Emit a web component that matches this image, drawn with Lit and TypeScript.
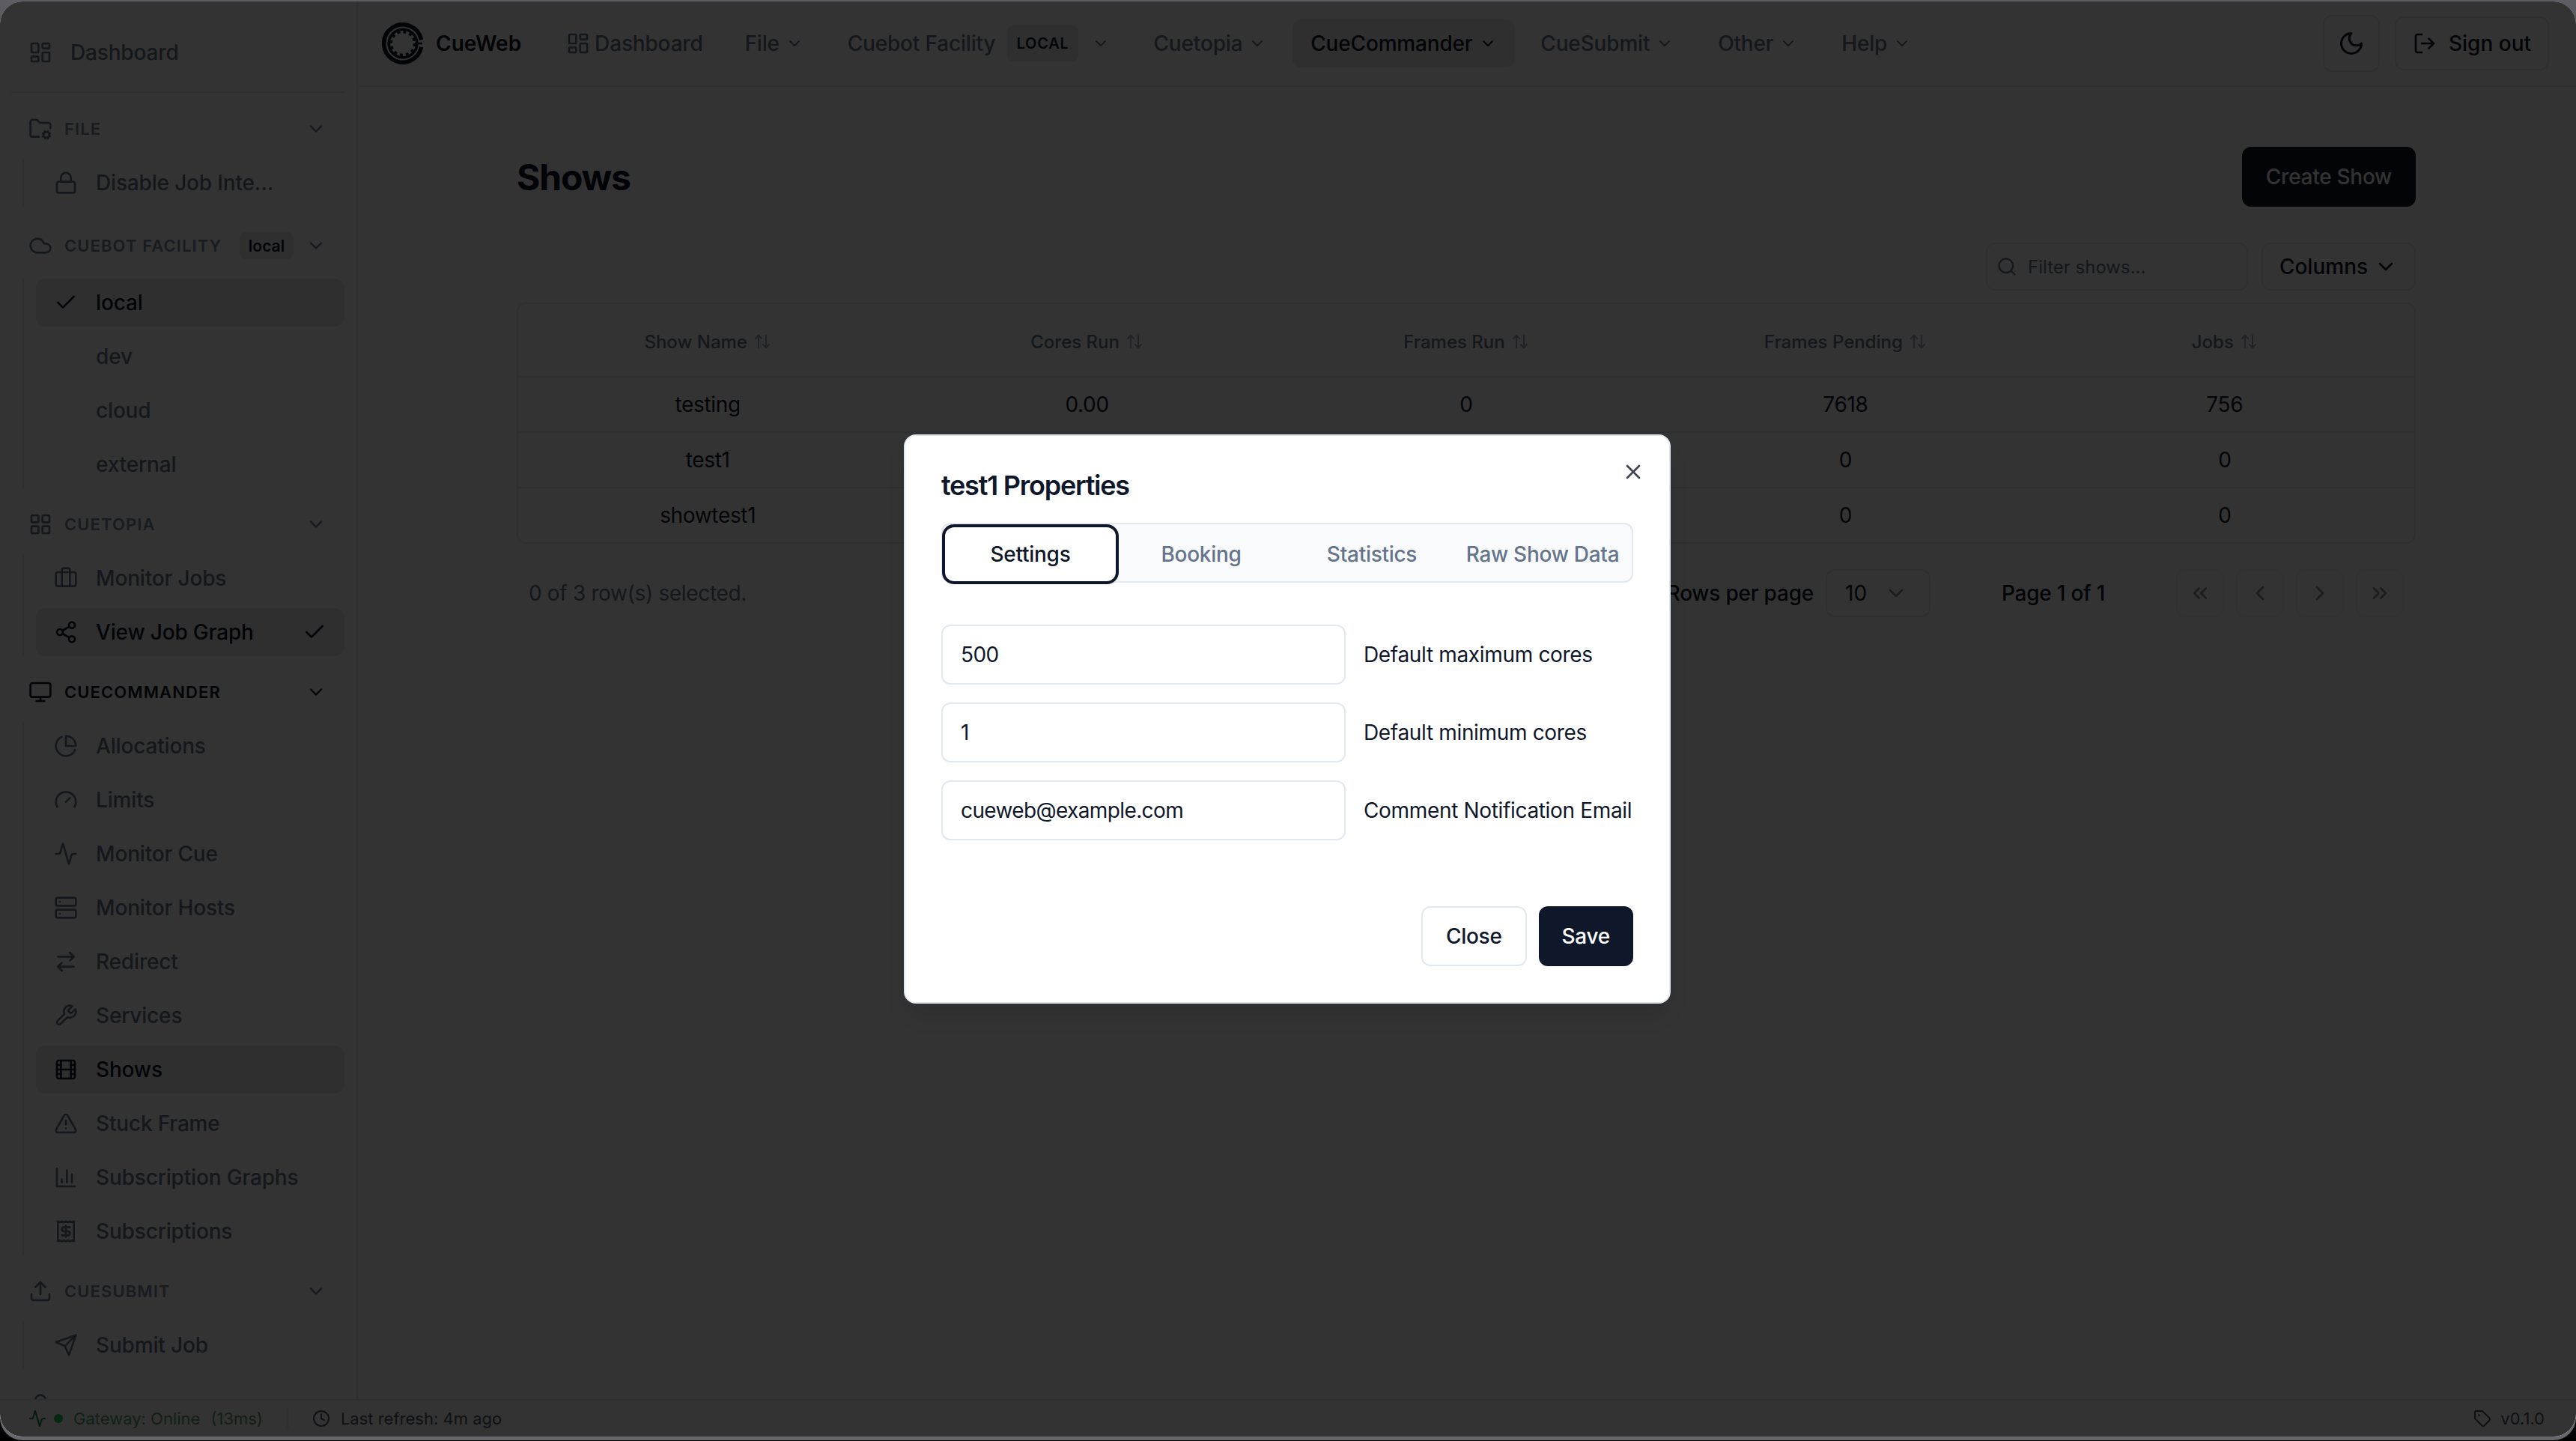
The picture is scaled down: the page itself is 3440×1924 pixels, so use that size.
import { LitElement, html, css, svg } from "lit";
import { customElement } from "lit/decorators.js";

const I: Record<string, any> = {
  dash: svg`<rect x="3" y="3" width="7" height="9" rx="1"/><rect x="14" y="3" width="7" height="5" rx="1"/><rect x="14" y="12" width="7" height="9" rx="1"/><rect x="3" y="16" width="7" height="5" rx="1"/>`,
  folderCog: svg`<circle cx="18" cy="18" r="3"/><path d="M10.3 20H4a2 2 0 0 1-2-2V5a2 2 0 0 1 2-2h3.9a2 2 0 0 1 1.69.9l.81 1.2a2 2 0 0 0 1.67.9H20a2 2 0 0 1 2 2v3.3"/><path d="m21.7 19.4-.9-.3"/><path d="m15.2 16.9-.9-.3"/><path d="m16.6 21.7.3-.9"/><path d="m19.1 15.2.3-.9"/><path d="m19.6 21.7-.4-1"/><path d="m16.8 15.3-.4-1"/><path d="m14.3 19.6 1-.4"/><path d="m20.7 16.8 1-.4"/>`,
  lock: svg`<rect x="3" y="11" width="18" height="11" rx="2"/><path d="M7 11V7a5 5 0 0 1 10 0v4"/>`,
  cloud: svg`<path d="M17.5 19H9a7 7 0 1 1 6.71-9h1.79a4.5 4.5 0 1 1 0 9Z"/>`,
  check: svg`<path d="M20 6 9 17l-5-5"/>`,
  grid: svg`<rect x="3" y="3" width="7" height="7" rx="1"/><rect x="14" y="3" width="7" height="7" rx="1"/><rect x="14" y="14" width="7" height="7" rx="1"/><rect x="3" y="14" width="7" height="7" rx="1"/>`,
  briefcase: svg`<path d="M16 20V4a2 2 0 0 0-2-2h-4a2 2 0 0 0-2 2v16"/><rect x="2" y="6" width="20" height="14" rx="2"/>`,
  share: svg`<circle cx="18" cy="5" r="3"/><circle cx="6" cy="12" r="3"/><circle cx="18" cy="19" r="3"/><line x1="8.59" y1="13.51" x2="15.42" y2="17.49"/><line x1="15.41" y1="6.51" x2="8.59" y2="10.49"/>`,
  monitor: svg`<rect x="2" y="3" width="20" height="14" rx="2"/><line x1="8" y1="21" x2="16" y2="21"/><line x1="12" y1="17" x2="12" y2="21"/>`,
  pie: svg`<path d="M21.21 15.89A10 10 0 1 1 8 2.83"/><path d="M22 12A10 10 0 0 0 12 2v10z"/>`,
  gauge: svg`<path d="m12 14 4-4"/><path d="M3.34 19a10 10 0 1 1 17.32 0"/>`,
  activity: svg`<path d="M22 12h-2.48a2 2 0 0 0-1.93 1.46l-2.35 8.36a.25.25 0 0 1-.48 0L9.24 2.18a.25.25 0 0 0-.48 0l-2.35 8.36A2 2 0 0 1 4.49 12H2"/>`,
  server: svg`<rect x="2" y="2" width="20" height="8" rx="2"/><rect x="2" y="14" width="20" height="8" rx="2"/><line x1="6" y1="6" x2="6.01" y2="6"/><line x1="6" y1="18" x2="6.01" y2="18"/>`,
  swap: svg`<path d="m16 3 4 4-4 4"/><path d="M20 7H4"/><path d="m8 21-4-4 4-4"/><path d="M4 17h16"/>`,
  wrench: svg`<path d="M14.7 6.3a1 1 0 0 0 0 1.4l1.6 1.6a1 1 0 0 0 1.4 0l3.77-3.77a6 6 0 0 1-7.94 7.94l-6.91 6.91a2.12 2.12 0 0 1-3-3l6.91-6.91a6 6 0 0 1 7.94-7.94l-3.76 3.76z"/>`,
  film: svg`<rect x="3" y="3" width="18" height="18" rx="2"/><path d="M7 3v18"/><path d="M3 7.5h4"/><path d="M3 12h18"/><path d="M3 16.5h4"/><path d="M17 3v18"/><path d="M17 7.5h4"/><path d="M17 16.5h4"/>`,
  alert: svg`<path d="m21.73 18-8-14a2 2 0 0 0-3.48 0l-8 14A2 2 0 0 0 4 21h16a2 2 0 0 0 1.73-3"/><path d="M12 9v4"/><path d="M12 17h.01"/>`,
  chart: svg`<path d="M3 3v18h18"/><path d="M18 17V9"/><path d="M13 17V5"/><path d="M8 17v-3"/>`,
  receipt: svg`<path d="M4 2v20l2-1 2 1 2-1 2 1 2-1 2 1 2-1 2 1V2l-2 1-2-1-2 1-2-1-2 1-2-1-2 1Z"/><path d="M16 8h-6a2 2 0 1 0 0 4h4a2 2 0 1 1 0 4H8"/><path d="M12 17.5v-11"/>`,
  upload: svg`<path d="M21 15v4a2 2 0 0 1-2 2H5a2 2 0 0 1-2-2v-4"/><polyline points="17 8 12 3 7 8"/><line x1="12" y1="3" x2="12" y2="15"/>`,
  send: svg`<path d="m22 2-7 20-4-9-9-4Z"/><path d="M22 2 11 13"/>`,
  moon: svg`<path d="M12 3a6 6 0 0 0 9 9 9 9 0 1 1-9-9Z"/>`,
  logout: svg`<path d="M9 21H5a2 2 0 0 1-2-2V5a2 2 0 0 1 2-2h4"/><polyline points="16 17 21 12 16 7"/><line x1="21" y1="12" x2="9" y2="12"/>`,
  search: svg`<circle cx="11" cy="11" r="8"/><path d="m21 21-4.3-4.3"/>`,
  sort: svg`<path d="m21 16-4 4-4-4"/><path d="M17 20V4"/><path d="m3 8 4-4 4 4"/><path d="M7 4v16"/>`,
  down: svg`<path d="m6 9 6 6 6-6"/>`,
  first: svg`<path d="m11 17-5-5 5-5"/><path d="m18 17-5-5 5-5"/>`,
  prev: svg`<path d="m15 18-6-6 6-6"/>`,
  next: svg`<path d="m9 18 6-6-6-6"/>`,
  last: svg`<path d="m6 17 5-5-5-5"/><path d="m13 17 5-5-5-5"/>`,
  x: svg`<path d="M18 6 6 18"/><path d="m6 6 12 12"/>`,
  clock: svg`<circle cx="12" cy="12" r="10"/><polyline points="12 6 12 12 16 14"/>`,
  tag: svg`<path d="M12.586 2.586A2 2 0 0 0 11.172 2H4a2 2 0 0 0-2 2v7.172a2 2 0 0 0 .586 1.414l8.704 8.704a2.426 2.426 0 0 0 3.42 0l6.58-6.58a2.426 2.426 0 0 0 0-3.42z"/><circle cx="7.5" cy="7.5" r=".5"/>`,
};

const ic = (n: string, size = "i16") =>
  html`<svg class="ic ${size}" viewBox="0 0 24 24" fill="none" stroke="currentColor" stroke-width="2" stroke-linecap="round" stroke-linejoin="round">${I[n]}</svg>`;

type Item = { label: string; icon?: string; active?: boolean; checkLeft?: boolean; checkRight?: boolean };
type Section = { label: string; icon: string; current?: boolean; badge?: string; items: Item[] };

const SECTIONS: Section[] = [
  { label: "File", icon: "folderCog", items: [{ label: "Disable Job Interaction", icon: "lock" }] },
  {
    label: "Cuebot Facility", icon: "cloud", badge: "local",
    items: [
      { label: "local", active: true, checkLeft: true },
      { label: "dev" }, { label: "cloud" }, { label: "external" },
    ],
  },
  {
    label: "Cuetopia", icon: "grid",
    items: [
      { label: "Monitor Jobs", icon: "briefcase" },
      { label: "View Job Graph", icon: "share", active: true, checkRight: true },
    ],
  },
  {
    label: "CueCommander", icon: "monitor", current: true,
    items: [
      { label: "Allocations", icon: "pie" }, { label: "Limits", icon: "gauge" },
      { label: "Monitor Cue", icon: "activity" }, { label: "Monitor Hosts", icon: "server" },
      { label: "Redirect", icon: "swap" }, { label: "Services", icon: "wrench" },
      { label: "Shows", icon: "film", active: true }, { label: "Stuck Frame", icon: "alert" },
      { label: "Subscription Graphs", icon: "chart" }, { label: "Subscriptions", icon: "receipt" },
    ],
  },
  { label: "CueSubmit", icon: "upload", items: [{ label: "Submit Job", icon: "send" }] },
  { label: "", icon: "lock", items: [] },
];

const NAV = [
  { label: "File" },
  { label: "Cuebot Facility", badge: "local" },
  { label: "Cuetopia" },
  { label: "CueCommander", active: true },
  { label: "CueSubmit" },
  { label: "Other" },
  { label: "Help" },
];

const COLS = ["Show Name", "Cores Run", "Frames Run", "Frames Pending", "Jobs"];
const ROWS = [
  ["testing", "0.00", "0", "7618", "756"],
  ["test1", "0.00", "0", "0", "0"],
  ["showtest1", "0.00", "0", "0", "0"],
];
const FIELDS = [
  ["500", "Default maximum cores"],
  ["1", "Default minimum cores"],
  ["cueweb@example.com", "Comment Notification Email"],
];

@customElement("app-root")
export class AppRoot extends LitElement {
  static styles = css`
    :host {
      display: block;
      zoom: 2;
      width: 1720px;
      height: 962px;
      overflow: hidden;
      font-family: Inter, "Liberation Sans", sans-serif;
      color: #0f172a;
      background: linear-gradient(to bottom, #5c5c62 0, #5c5c62 50%, #000 50%, #000 100%);
    }
    * { box-sizing: border-box; }
    .ic { display: block; flex: none; }
    .i16 { width: 16px; height: 16px; }
    .i14 { width: 14px; height: 14px; }
    .i12 { width: 12px; height: 12px; }
    .i18 { width: 18px; height: 18px; }
    .frame { padding-top: 1px; height: 962px; }
    .window {
      position: relative;
      height: 958px;
      border-radius: 15px;
      overflow: hidden;
      background: #fff;
      display: flex;
      flex-direction: column;
      box-shadow: 0 2.5px 0 #66666c;
    }
    .body { flex: 1; min-height: 0; display: flex; }

    /* sidebar */
    .side {
      width: 239px;
      flex: none;
      border-right: 1px solid #e2e8f0;
      padding: 18px 8px 0 7px;
      overflow: hidden;
      font-size: 14px;
      color: #64748b;
      letter-spacing: -0.006em;
    }
    .top-link { display: flex; align-items: center; gap: 12px; height: 32px; padding: 0 12px; font-weight: 500; }
    .rule { height: 1px; background: #e2e8f0; margin: 10px 0; }
    .sec { margin-bottom: 10px; }
    .sec-head {
      height: 28px;
      display: flex;
      align-items: center;
      padding: 0 12px;
      gap: 8px;
      font-size: 11px;
      font-weight: 600;
      letter-spacing: 0.05em;
      text-transform: uppercase;
      color: #7b8a9f;
    }
    .sec-head.tall { height: 32px; }
    .sec-head.cur { color: #0f172a; margin-bottom: 0.5px; }
    .sec-head .ic:first-child { color: #64748b; }
    .sec-head.cur .ic:first-child { color: #0f172a; }
    .sec-head .chev { margin-left: auto; color: #64748b; }
    .sec-head.cur .chev { color: #0f172a; }
    .sec-name { white-space: nowrap; }
    .sec-badge {
      margin-left: auto;
      height: 18px;
      width: 36px;
      display: flex;
      align-items: center;
      justify-content: center;
      border-radius: 4px;
      background: #e9eaec;
      color: #0f172a;
      font-size: 10.5px;
      letter-spacing: 0;
      text-transform: none;
      font-weight: 600;
    }
    .sec-badge + .chev { margin-left: 0; }
    .list {
      margin: 6px 0 0 8px;
      padding-left: 8px;
      border-left: 1px solid #e2e8f0;
      display: flex;
      flex-direction: column;
      gap: 4px;
    }
    .item {
      height: 32px;
      border-radius: 6px;
      display: flex;
      align-items: center;
      gap: 12px;
      padding: 0 12px;
      font-weight: 500;
    }
    .item.on { background: #e9eaec; color: #0f172a; }
    .item .blank { width: 16px; height: 16px; flex: none; }
    .item .txt { white-space: nowrap; overflow: hidden; text-overflow: ellipsis; flex: 0 1 auto; }
    .item .tail { margin-left: auto; }
    .item.trunc .txt { max-width: 122px; }

    /* header */
    .right { flex: 1; min-width: 0; display: flex; flex-direction: column; }
    .head {
      height: 57px;
      flex: none;
      border-bottom: 1px solid #e2e8f0;
      display: flex;
      align-items: center;
      padding: 0 18px 0 16px;
    }
    .brand { display: flex; align-items: center; gap: 8px; font-size: 14px; font-weight: 600; margin-right: 18px; color: #0f172a; }
    .nav { display: flex; align-items: center; gap: 5.4px; font-size: 14px; font-weight: 500; color: #64748b; letter-spacing: -0.006em; }
    .nav-item { height: 32px; display: flex; align-items: center; padding: 0 12px; border-radius: 6px; white-space: nowrap; }
    .nav-item:first-child { margin-right: -1.5px; }
    .nav-item.on { background: #e9eaec; color: #0f172a; }
    .nav-item .i12 { margin-left: 4px; }
    .nav-item .i16 { margin-right: 3px; }
    .nav-badge {
      margin: 0 5px 0 8px;
      height: 24px;
      display: flex;
      align-items: center;
      padding: 0 6px;
      border-radius: 4px;
      background: #e9eaec;
      color: #0f172a;
      font-size: 10px;
      font-weight: 600;
      letter-spacing: 0.04em;
      text-transform: uppercase;
    }
    .head-right { margin-left: auto; display: flex; align-items: center; gap: 10px; }
    .btn-ghost {
      border: 1px solid #e2e8f0;
      border-radius: 6px;
      display: flex;
      align-items: center;
      justify-content: center;
      color: #0f172a;
      font-size: 14px;
      font-weight: 500;
    }
    .moon { width: 38px; height: 38px; }
    .signout { height: 36px; width: 103px; gap: 8px; }

    /* main */
    .main { flex: 1; min-height: 0; overflow: hidden; padding-top: 40px; }
    .wrap { width: 1268px; margin-left: 106px; }
    .title-row { height: 40px; display: flex; align-items: center; justify-content: space-between; margin-bottom: 24px; }
    h1 { margin: 0; font-size: 24px; font-weight: 700; letter-spacing: -0.025em; }
    .primary {
      height: 40px; padding: 0 16px; border-radius: 6px; display: flex; align-items: center;
      background: #0f172a; color: #fff; font-size: 14px; font-weight: 500; letter-spacing: -0.01em;
    }
    .filter-row { display: flex; justify-content: flex-end; gap: 9px; margin-bottom: 8px; height: 32px; }
    .filter {
      width: 175px; border: 1px solid #e2e8f0; border-radius: 6px; display: flex; align-items: center;
      padding-left: 6px; gap: 7px; font-size: 12px; color: #64748b;
    }
    .columns { width: 103px; gap: 4px; }
    .table { border: 1px solid #e2e8f0; border-radius: 6px; width: 100%; }
    .tr { display: grid; grid-template-columns: repeat(5, 1fr); align-items: center; justify-items: center; height: 37px; border-bottom: 1px solid #e2e8f0; font-size: 14px; letter-spacing: -0.012em; }
    .tr:last-child { border-bottom: 0; height: 36px; }
    .tr.th { height: 49px; padding-top: 2px; font-size: 12px; font-weight: 500; color: #64748b; letter-spacing: 0; }
    .th-cell { display: flex; align-items: center; gap: 4px; }
    .th-cell .ic { opacity: 0.6; }
    .foot-row { display: flex; align-items: center; height: 32px; margin-top: 17px; padding: 0 8px; font-size: 14px; }
    .selected { color: #64748b; flex: 1; letter-spacing: -0.012em; }
    .per { font-weight: 500; margin-right: 8px; letter-spacing: -0.008em; }
    .select { width: 70px; height: 32px; border: 1px solid #e2e8f0; border-radius: 6px; display: flex; align-items: center; justify-content: space-between; padding: 0 14px 0 12px; }
    .select .ic { opacity: 0.5; }
    .page { width: 100px; margin: 0 32px; text-align: center; font-weight: 500; white-space: nowrap; letter-spacing: -0.008em; }
    .pager { display: flex; gap: 8px; }
    .pg { width: 32px; height: 32px; border: 1px solid #e2e8f0; border-radius: 6px; display: flex; align-items: center; justify-content: center; opacity: 0.5; }

    /* status */
    .status {
      height: 25px;
      flex: none;
      border-top: 1px solid #e2e8f0;
      display: flex;
      align-items: center;
      padding: 0 21px 0 19px;
      font-size: 11px;
      color: #64748b;
      position: relative;
      background: #fff;
    }
    .gw { color: #15803d; display: flex; align-items: center; }
    .gw > span:not(.dot) { opacity: 0.75; }
    .gw .ic { margin-right: 5px; }
    .dot { width: 6px; height: 6px; border-radius: 50%; background: #22c55e; margin-right: 7px; }
    .ms { margin-left: 7px; }
    .sep { width: 1px; height: 14px; background: #e2e8f0; margin: 0 16px 0 16px; }
    .ref { display: flex; align-items: center; gap: 7px; color: #0f172a; opacity: 0.75; }
    .ver { margin-left: auto; display: flex; align-items: center; gap: 6px; color: #0f172a; opacity: 0.75; }

    /* overlay */
    .overlay { position: absolute; inset: 0; background: rgba(0, 0, 0, 0.8); }
    .dialog {
      position: absolute;
      left: 603.5px;
      top: 289px;
      width: 512px;
      background: #fff;
      border: 1px solid #e2e8f0;
      border-radius: 8px;
      padding: 24px;
      box-shadow: 0 10px 15px -3px rgba(0,0,0,.1);
    }
    .close-x { position: absolute; right: 16px; top: 16px; color: #0f172a; opacity: .8; }
    h2 { margin: 0 0 16px; font-size: 18px; line-height: 18px; font-weight: 600; letter-spacing: -0.035em; }
    .tabs {
      height: 40px;
      border: 1px solid #e2e8f0;
      border-radius: 6px;
      background: #f8fafc;
      padding: 1px 1.5px 1px 1.5px;
      display: grid;
      grid-template-columns: repeat(4, 114px);
      font-size: 14px;
      font-weight: 500;
      color: #64748b;
      margin-bottom: 28px;
      letter-spacing: -0.01em;
    }
    .tab { height: 36px; margin-top: 1px; display: flex; align-items: center; justify-content: center; border-radius: 6px; white-space: nowrap; }
    .tab.on { background: #fff; color: #0f172a; box-shadow: 0 0 0 2px #0f172a; }
    .fields { display: flex; flex-direction: column; gap: 12px; margin-bottom: 44px; }
    .field { display: flex; align-items: center; gap: 12px; }
    .input {
      flex: 1; height: 40px; border: 1px solid #e2e8f0; border-radius: 6px; display: flex; align-items: center; padding: 0 12px; font-size: 14px; letter-spacing: -0.022em;
    }
    .label { font-size: 14px; font-weight: 400; width: 180px; white-space: nowrap; letter-spacing: -0.012em; }
    .actions { display: flex; justify-content: flex-end; gap: 8px; }
    .actions .primary { padding: 0 15.5px; }
    .secondary { height: 40px; padding: 0 15.5px; border: 1px solid #e2e8f0; border-radius: 6px; display: flex; align-items: center; font-size: 14px; font-weight: 500; background: #fff; letter-spacing: -0.01em; }
  `;

  private logo() {
    return html`<svg class="logo" width="28" height="28" viewBox="0 0 28 28" fill="none">
      <path d="M26.3 11.6A12.6 12.6 0 1 0 26.3 16.4" stroke="#0f172a" stroke-width="2.8"/>
      <path d="M22 14h5" stroke="#0f172a" stroke-width="1.2"/>
      <circle cx="14" cy="14" r="9.4" stroke="#0f172a" stroke-width="1.8"/>
      <circle cx="14" cy="14" r="7.7" stroke="#0f172a" stroke-width="1.6" stroke-dasharray="2 2.03"/>
    </svg>`;
  }

  private section(s: Section) {
    return html`<div class="sec">
      <div class="sec-head ${s.current ? "cur" : ""} ${s.badge ? "tall" : ""}">
        ${ic(s.icon)}
        <span class="sec-name">${s.label}</span>
        ${s.badge ? html`<span class="sec-badge">${s.badge}</span>` : ""}
        ${ic("down", "i14 chev")}
      </div>
      ${s.items.length
        ? html`<div class="list">
            ${s.items.map(
              (it) => html`<div class="item ${it.active ? "on" : ""} ${it.label.startsWith("Disable") ? "trunc" : ""}">
                ${it.checkLeft ? ic("check") : it.icon ? ic(it.icon) : html`<span class="blank"></span>`}
                <span class="txt">${it.label}</span>
                ${it.checkRight ? ic("check", "i16 tail") : ""}
              </div>`
            )}
          </div>`
        : ""}
    </div>`;
  }

  render() {
    return html`<div class="frame">
      <div class="window">
        <div class="body">
          <aside class="side">
            <div class="top-link">${ic("dash")}<span>Dashboard</span></div>
            <div class="rule"></div>
            ${SECTIONS.map((s) => this.section(s))}
          </aside>
          <div class="right">
            <header class="head">
              <div class="brand">${this.logo()}<span>CueWeb</span></div>
              <nav class="nav">
                <div class="nav-item">${ic("dash")}<span>Dashboard</span></div>
                ${NAV.map(
                  (n) => html`<div class="nav-item ${n.active ? "on" : ""}">
                    <span>${n.label}</span>
                    ${n.badge ? html`<span class="nav-badge">${n.badge}</span>` : ""}
                    ${ic("down", "i12")}
                  </div>`
                )}
              </nav>
              <div class="head-right">
                <div class="btn-ghost moon">${ic("moon", "i18")}</div>
                <div class="btn-ghost signout">${ic("logout")}<span>Sign out</span></div>
              </div>
            </header>
            <main class="main">
              <div class="wrap">
                <div class="title-row">
                  <h1>Shows</h1>
                  <div class="primary">Create Show</div>
                </div>
                <div class="filter-row">
                  <div class="filter">${ic("search", "i14")}<span>Filter shows...</span></div>
                  <div class="btn-ghost columns"><span>Columns</span>${ic("down")}</div>
                </div>
                <div class="table">
                  <div class="tr th">
                    ${COLS.map((c) => html`<div class="th-cell"><span>${c}</span>${ic("sort", "i12")}</div>`)}
                  </div>
                  ${ROWS.map((r) => html`<div class="tr">${r.map((c) => html`<div>${c}</div>`)}</div>`)}
                </div>
                <div class="foot-row">
                  <div class="selected">0 of 3 row(s) selected.</div>
                  <div class="per">Rows per page</div>
                  <div class="select"><span>10</span>${ic("down")}</div>
                  <div class="page">Page 1 of 1</div>
                  <div class="pager">
                    ${["first", "prev", "next", "last"].map((n) => html`<div class="pg">${ic(n)}</div>`)}
                  </div>
                </div>
              </div>
            </main>
          </div>
        </div>
        <footer class="status">
          <div class="gw">${ic("activity", "i12")}<span class="dot"></span><span>Gateway: Online</span><span class="ms">(13ms)</span></div>
          <div class="sep"></div>
          <div class="ref">${ic("clock", "i12")}<span>Last refresh: 4m ago</span></div>
          <div class="ver">${ic("tag", "i12")}<span>v0.1.0</span></div>
        </footer>
        <div class="overlay"></div>
        <div class="dialog">
          <div class="close-x">${ic("x")}</div>
          <h2>test1 Properties</h2>
          <div class="tabs">
            <div class="tab on">Settings</div>
            <div class="tab">Booking</div>
            <div class="tab">Statistics</div>
            <div class="tab">Raw Show Data</div>
          </div>
          <div class="fields">
            ${FIELDS.map(
              ([v, l]) => html`<div class="field"><div class="input">${v}</div><div class="label">${l}</div></div>`
            )}
          </div>
          <div class="actions">
            <div class="secondary">Close</div>
            <div class="primary">Save</div>
          </div>
        </div>
      </div>
    </div>`;
  }
}
